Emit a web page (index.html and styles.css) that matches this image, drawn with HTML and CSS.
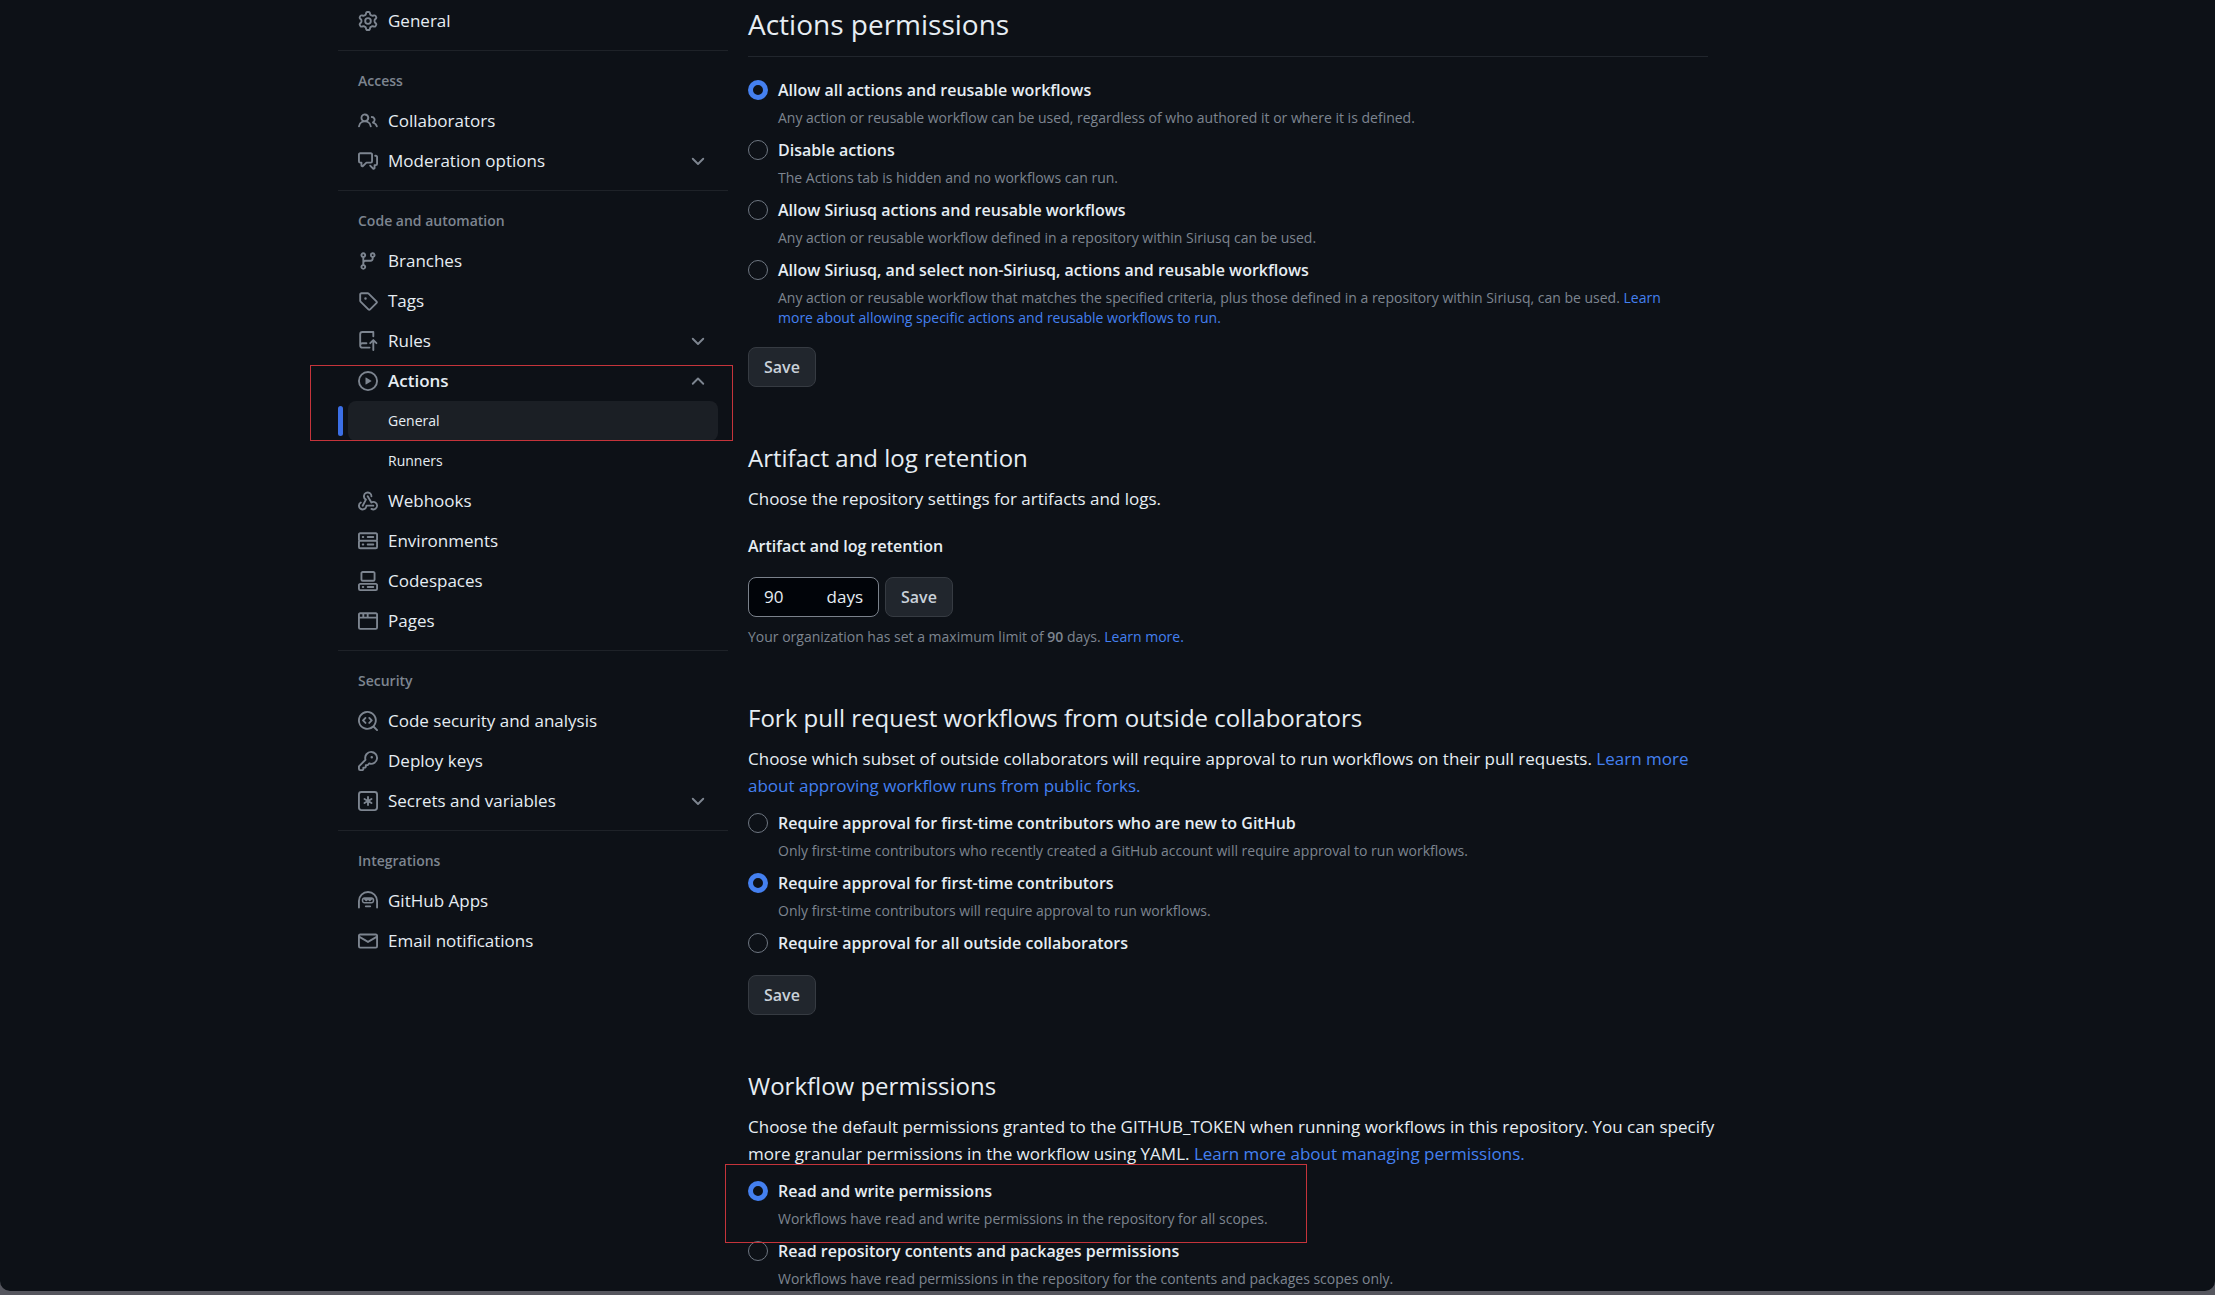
FILE: index.html
```html
<!DOCTYPE html>
<html lang="en">
<head>
    <meta charset="UTF-8">
    <meta name="viewport" content="width=device-width, initial-scale=1.0">
    <title>Actions settings</title>
    <link rel="stylesheet" href="styles.css">
</head>
<body>
    <div class="window">
        <div class="layout">
            <nav class="sidebar" aria-label="Settings">
                <ul>
                    <li><a class="item" href="#">
                        <svg class="icon" viewBox="0 0 16 16"><path d="M8 0a8.2 8.2 0 0 1 .701.031C9.444.095 9.99.645 10.16 1.29l.288 1.107c.018.066.079.158.212.224.231.114.454.243.668.386.123.082.233.09.299.071l1.103-.303c.644-.176 1.392.021 1.82.63.27.385.506.792.704 1.218.315.675.111 1.422-.364 1.891l-.814.806c-.049.048-.098.147-.088.294.016.257.016.515 0 .772-.01.147.038.246.088.294l.814.806c.475.469.679 1.216.364 1.891a7.977 7.977 0 0 1-.704 1.217c-.428.61-1.176.807-1.82.63l-1.102-.302c-.067-.019-.177-.011-.3.071a5.909 5.909 0 0 1-.668.386c-.133.066-.194.158-.211.224l-.29 1.106c-.168.646-.715 1.196-1.458 1.26a8.006 8.006 0 0 1-1.402 0c-.743-.064-1.289-.614-1.458-1.26l-.289-1.106c-.018-.066-.079-.158-.212-.224a5.738 5.738 0 0 1-.668-.386c-.123-.082-.233-.09-.299-.071l-1.103.303c-.644.176-1.392-.021-1.82-.63a8.12 8.12 0 0 1-.704-1.218c-.315-.675-.111-1.422.363-1.891l.815-.806c.05-.048.098-.147.088-.294a6.214 6.214 0 0 1 0-.772c.01-.147-.038-.246-.088-.294l-.815-.806C.635 6.045.431 5.298.746 4.623a7.92 7.92 0 0 1 .704-1.217c.428-.61 1.176-.807 1.82-.63l1.102.302c.067.019.177.011.3-.071.214-.143.437-.272.668-.386.133-.066.194-.158.211-.224l.29-1.106C6.009.645 6.556.095 7.299.03 7.53.01 7.764 0 8 0Zm-.571 1.525c-.036.003-.108.036-.137.146l-.289 1.105c-.147.561-.549.967-.998 1.189-.173.086-.34.183-.5.29-.417.278-.97.423-1.529.27l-1.103-.303c-.109-.03-.175.016-.195.045-.22.312-.412.644-.573.99-.014.031-.021.11.059.19l.815.806c.411.406.562.957.53 1.456a4.709 4.709 0 0 0 0 .582c.032.499-.119 1.05-.53 1.456l-.815.806c-.081.08-.073.159-.059.19.162.346.353.677.573.989.02.03.085.076.195.046l1.102-.303c.56-.153 1.113-.008 1.53.27.161.107.328.204.501.29.447.222.85.629.997 1.189l.289 1.105c.029.109.101.143.137.146a6.6 6.6 0 0 0 1.142 0c.036-.003.108-.036.137-.146l.289-1.105c.147-.561.549-.967.998-1.189.173-.086.34-.183.5-.29.417-.278.97-.423 1.529-.27l1.103.303c.109.029.175-.016.195-.045.22-.313.411-.644.573-.99.014-.031.021-.11-.059-.19l-.815-.806c-.411-.406-.562-.957-.53-1.456a4.709 4.709 0 0 0 0-.582c-.032-.499.119-1.05.53-1.456l.815-.806c.081-.08.073-.159.059-.19a6.464 6.464 0 0 0-.573-.989c-.02-.03-.085-.076-.195-.046l-1.102.303c-.56.153-1.113.008-1.53-.27a4.44 4.44 0 0 0-.501-.29c-.447-.222-.85-.629-.997-1.189l-.289-1.105c-.029-.11-.101-.143-.137-.146a6.6 6.6 0 0 0-1.142 0ZM11 8a3 3 0 1 1-6 0 3 3 0 0 1 6 0ZM9.5 8a1.5 1.5 0 1 0-3.001.001A1.5 1.5 0 0 0 9.5 8Z"/></svg>
                        General</a></li>
                </ul>

                <h3>Access</h3>
                <ul>
                    <li><a class="item" href="#">
                        <svg class="icon" viewBox="0 0 16 16"><path d="M2 5.5a3.5 3.5 0 1 1 5.898 2.549 5.508 5.508 0 0 1 3.034 4.084.75.75 0 1 1-1.482.235 4 4 0 0 0-7.9 0 .75.75 0 0 1-1.482-.236A5.507 5.507 0 0 1 3.102 8.05 3.493 3.493 0 0 1 2 5.5ZM11 4a3.001 3.001 0 0 1 2.22 5.018 5.01 5.01 0 0 1 2.56 3.012.749.749 0 0 1-.885.954.752.752 0 0 1-.549-.514 3.507 3.507 0 0 0-2.522-2.372.75.75 0 0 1-.574-.73v-.352a.75.75 0 0 1 .416-.672A1.5 1.5 0 0 0 11 5.5.75.75 0 0 1 11 4Zm-5.5-.5a2 2 0 1 0-.001 3.999A2 2 0 0 0 5.5 3.5Z"/></svg>
                        Collaborators</a></li>
                    <li><a class="item" href="#">
                        <svg class="icon" viewBox="0 0 16 16"><path d="M1.75 1h8.5c.966 0 1.75.784 1.75 1.75v5.5A1.75 1.75 0 0 1 10.25 10H7.061l-2.574 2.573A1.458 1.458 0 0 1 2 11.543V10h-.25A1.75 1.75 0 0 1 0 8.25v-5.5C0 1.784.784 1 1.75 1ZM1.5 2.75v5.5c0 .138.112.25.25.25h1a.75.75 0 0 1 .75.75v2.19l2.72-2.72a.749.749 0 0 1 .53-.22h3.5a.25.25 0 0 0 .25-.25v-5.5a.25.25 0 0 0-.25-.25h-8.5a.25.25 0 0 0-.25.25Zm13 2a.25.25 0 0 0-.25-.25h-.5a.75.75 0 0 1 0-1.5h.5c.966 0 1.75.784 1.75 1.75v5.5A1.75 1.75 0 0 1 14.25 12H14v1.543a1.458 1.458 0 0 1-2.487 1.03L9.22 12.28a.749.749 0 0 1 .326-1.275.749.749 0 0 1 .734.215l2.22 2.22v-2.19a.75.75 0 0 1 .75-.75h1a.25.25 0 0 0 .25-.25Z"/></svg>
                        Moderation options
                        <svg class="chevron" viewBox="0 0 16 16"><path d="M3.8 6.2 8 10.4l4.2-4.2"/></svg></a></li>
                </ul>

                <h3>Code and automation</h3>
                <ul>
                    <li><a class="item" href="#">
                        <svg class="icon" viewBox="0 0 16 16"><path d="M9.5 3.25a2.25 2.25 0 1 1 3 2.122V6A2.5 2.5 0 0 1 10 8.5H6a1 1 0 0 0-1 1v1.128a2.251 2.251 0 1 1-1.5 0V5.372a2.25 2.25 0 1 1 1.5 0v1.836A2.493 2.493 0 0 1 6 7h4a1 1 0 0 0 1-1v-.628A2.25 2.25 0 0 1 9.5 3.25Zm-6 0a.75.75 0 1 0 1.5 0 .75.75 0 0 0-1.5 0Zm8.25-.75a.75.75 0 1 0 0 1.5.75.75 0 0 0 0-1.5ZM4.25 12a.75.75 0 1 0 0 1.5.75.75 0 0 0 0-1.5Z"/></svg>
                        Branches</a></li>
                    <li><a class="item" href="#">
                        <svg class="icon" viewBox="0 0 16 16"><path d="M1 7.775V2.75C1 1.784 1.784 1 2.75 1h5.025c.464 0 .91.184 1.238.513l6.25 6.25a1.75 1.75 0 0 1 0 2.474l-5.026 5.026a1.75 1.75 0 0 1-2.474 0l-6.25-6.25A1.752 1.752 0 0 1 1 7.775Zm1.5 0c0 .066.026.13.073.177l6.25 6.25a.25.25 0 0 0 .354 0l5.025-5.025a.25.25 0 0 0 0-.354l-6.25-6.25a.25.25 0 0 0-.177-.073H2.75a.25.25 0 0 0-.25.25ZM6 5a1 1 0 1 1 0 2 1 1 0 0 1 0-2Z"/></svg>
                        Tags</a></li>
                    <li><a class="item" href="#">
                        <svg class="icon" viewBox="0 0 16 16"><path d="M1 2.5A2.5 2.5 0 0 1 3.5 0h8.75a.75.75 0 0 1 .75.75v3.5a.75.75 0 0 1-1.5 0V1.5h-8a1 1 0 0 0-1 1v6.708A2.493 2.493 0 0 1 3.5 9h3.25a.75.75 0 0 1 0 1.5H3.5a1 1 0 0 0 0 2h5.75a.75.75 0 0 1 0 1.5H3.5A2.5 2.5 0 0 1 1 11.5Zm13.23 7.79-.001-.001-1.224-1.224v6.184a.75.75 0 0 1-1.5 0V9.066L10.28 10.29a.75.75 0 0 1-1.06-1.061l2.505-2.504a.75.75 0 0 1 1.06 0L15.29 9.23a.751.751 0 0 1-.018 1.042.751.751 0 0 1-1.042.018Z"/></svg>
                        Rules
                        <svg class="chevron" viewBox="0 0 16 16"><path d="M3.8 6.2 8 10.4l4.2-4.2"/></svg></a></li>
                    <li class="highlight"><a class="item open" href="#">
                        <svg class="icon" viewBox="0 0 16 16"><path d="M8 0a8 8 0 1 1 0 16A8 8 0 0 1 8 0ZM1.5 8a6.5 6.5 0 1 0 13 0 6.5 6.5 0 0 0-13 0Zm4.879-2.773 4.264 2.559a.25.25 0 0 1 0 .428l-4.264 2.559A.25.25 0 0 1 6 10.559V5.442a.25.25 0 0 1 .379-.215Z"/></svg>
                        Actions
                        <svg class="chevron" viewBox="0 0 16 16"><path d="M3.8 10.2 8 6l4.2 4.2"/></svg></a>
                        <ul>
                            <li><a class="item sub current" href="#" aria-current="page">General</a></li>
                            <li><a class="item sub" href="#">Runners</a></li>
                        </ul>
                    </li>
                    <li><a class="item" href="#">
                        <svg class="icon" viewBox="0 0 16 16"><path d="M5.5 4.25a2.25 2.25 0 0 1 4.5 0 .75.75 0 0 0 1.5 0 3.75 3.75 0 1 0-6.14 2.889l-2.272 4.258a.75.75 0 0 0 1.324.706L7 7.25a.75.75 0 0 0-.309-1.015A2.25 2.25 0 0 1 5.5 4.25Z"/><path d="M7.364 3.607a.75.75 0 0 1 1.03.257l2.608 4.349a3.75 3.75 0 1 1-.628 6.785.75.75 0 0 1 .752-1.299 2.25 2.25 0 1 0-.033-3.88.75.75 0 0 1-1.03-.256L7.107 4.636a.75.75 0 0 1 .257-1.03Z"/><path d="M2.9 8.776A.75.75 0 0 1 2.625 9.8 2.25 2.25 0 1 0 6 11.75a.75.75 0 0 1 .75-.751h5.5a.75.75 0 0 1 0 1.5H7.425a3.751 3.751 0 1 1-5.55-3.998.75.75 0 0 1 1.024.274Z"/></svg>
                        Webhooks</a></li>
                    <li><a class="item" href="#">
                        <svg class="icon" viewBox="0 0 16 16"><path d="M1.75 1h12.5c.966 0 1.75.784 1.75 1.75v4c0 .372-.116.717-.314 1 .198.283.314.628.314 1v4a1.75 1.75 0 0 1-1.75 1.75H1.75A1.75 1.75 0 0 1 0 12.75v-4c0-.358.109-.707.314-1a1.739 1.739 0 0 1-.314-1v-4C0 1.784.784 1 1.75 1ZM1.5 2.75v4c0 .138.112.25.25.25h12.5a.25.25 0 0 0 .25-.25v-4a.25.25 0 0 0-.25-.25H1.75a.25.25 0 0 0-.25.25Zm.25 5.75a.25.25 0 0 0-.25.25v4c0 .138.112.25.25.25h12.5a.25.25 0 0 0 .25-.25v-4a.25.25 0 0 0-.25-.25ZM7 4.75A.75.75 0 0 1 7.75 4h4.5a.75.75 0 0 1 0 1.5h-4.5A.75.75 0 0 1 7 4.75ZM7.75 10h4.5a.75.75 0 0 1 0 1.5h-4.5a.75.75 0 0 1 0-1.5ZM3 4.75A.75.75 0 0 1 3.75 4h.5a.75.75 0 0 1 0 1.5h-.5A.75.75 0 0 1 3 4.75ZM3.75 10h.5a.75.75 0 0 1 0 1.5h-.5a.75.75 0 0 1 0-1.5Z"/></svg>
                        Environments</a></li>
                    <li><a class="item" href="#">
                        <svg class="icon" viewBox="0 0 16 16"><path d="M0 11.25c0-.966.784-1.75 1.75-1.75h12.5c.966 0 1.75.784 1.75 1.75v3A1.75 1.75 0 0 1 14.25 16H1.75A1.75 1.75 0 0 1 0 14.25Zm2-9.5C2 .784 2.784 0 3.75 0h8.5C13.216 0 14 .784 14 1.75v5a1.75 1.75 0 0 1-1.75 1.75h-8.5A1.75 1.75 0 0 1 2 6.75Zm1.75-.25a.25.25 0 0 0-.25.25v5c0 .138.112.25.25.25h8.5a.25.25 0 0 0 .25-.25v-5a.25.25 0 0 0-.25-.25Zm-2 9.5a.25.25 0 0 0-.25.25v3c0 .138.112.25.25.25h12.5a.25.25 0 0 0 .25-.25v-3a.25.25 0 0 0-.25-.25Z"/><path d="M7 12.75a.75.75 0 0 1 .75-.75h4.5a.75.75 0 0 1 0 1.5h-4.5a.75.75 0 0 1-.75-.75Zm-4 0a.75.75 0 0 1 .75-.75h.5a.75.75 0 0 1 0 1.5h-.5a.75.75 0 0 1-.75-.75Z"/></svg>
                        Codespaces</a></li>
                    <li><a class="item" href="#">
                        <svg class="icon" viewBox="0 0 16 16"><path d="M0 2.75C0 1.784.784 1 1.75 1h12.5c.966 0 1.75.784 1.75 1.75v10.5A1.75 1.75 0 0 1 14.25 15H1.75A1.75 1.75 0 0 1 0 13.25ZM14.5 6h-13v7.25c0 .138.112.25.25.25h12.5a.25.25 0 0 0 .25-.25Zm-6-3.5v2h6V2.75a.25.25 0 0 0-.25-.25ZM5 2.5v2h2v-2Zm-3.25 0a.25.25 0 0 0-.25.25V4.5h2v-2Z"/></svg>
                        Pages</a></li>
                </ul>

                <h3>Security</h3>
                <ul>
                    <li><a class="item" href="#">
                        <svg class="icon" viewBox="0 0 16 16"><path d="M8.47 4.97a.75.75 0 0 0 0 1.06L9.94 7.5 8.47 8.97a.75.75 0 1 0 1.06 1.06l2-2a.75.75 0 0 0 0-1.06l-2-2a.75.75 0 0 0-1.06 0ZM6.53 6.03a.75.75 0 0 0-1.06-1.06l-2 2a.75.75 0 0 0 0 1.06l2 2a.75.75 0 1 0 1.06-1.06L5.06 7.5l1.47-1.47Z"/><path d="M12.246 13.307a7.501 7.501 0 1 1 1.06-1.06l2.474 2.473a.749.749 0 1 1-1.06 1.06l-2.474-2.473ZM1.5 7.5a6.002 6.002 0 0 0 3.608 5.504 6.002 6.002 0 0 0 6.486-1.117.748.748 0 0 1 .292-.293A6 6 0 1 0 1.5 7.5Z"/></svg>
                        Code security and analysis</a></li>
                    <li><a class="item" href="#">
                        <svg class="icon" viewBox="0 0 16 16"><path d="M10.5 0a5.499 5.499 0 1 1-1.288 10.848l-.932.932a.749.749 0 0 1-.53.22H7v.75a.749.749 0 0 1-.22.53l-.5.5a.749.749 0 0 1-.53.22H5v.75a.749.749 0 0 1-.22.53l-.5.5a.749.749 0 0 1-.53.22h-2A1.75 1.75 0 0 1 0 14.25v-2c0-.199.079-.389.22-.53l4.932-4.932A5.5 5.5 0 0 1 10.5 0Zm-4 5.5c-.001.431.069.86.205 1.269a.75.75 0 0 1-.181.768L1.5 12.56v1.69c0 .138.112.25.25.25h1.69l.06-.06v-1.19a.75.75 0 0 1 .75-.75h1.19l.06-.06v-1.19a.75.75 0 0 1 .75-.75h1.19l1.023-1.025a.75.75 0 0 1 .768-.18A4 4 0 1 0 6.5 5.5ZM11 6a1 1 0 1 1 0-2 1 1 0 0 1 0 2Z"/></svg>
                        Deploy keys</a></li>
                    <li><a class="item" href="#">
                        <svg class="icon" viewBox="0 0 16 16"><path d="M0 2.75A2.75 2.75 0 0 1 2.75 0h10.5A2.75 2.75 0 0 1 16 2.75v10.5A2.75 2.75 0 0 1 13.25 16H2.75A2.75 2.75 0 0 1 0 13.25ZM2.75 1.5c-.69 0-1.25.56-1.25 1.25v10.5c0 .69.56 1.25 1.25 1.25h10.5c.69 0 1.25-.56 1.25-1.25V2.75c0-.69-.56-1.25-1.25-1.25Z"/><path d="M8 4a.75.75 0 0 1 .75.75V6.7l1.69-.975a.75.75 0 0 1 .75 1.3L9.5 8l1.69.976a.75.75 0 0 1-.75 1.298L8.75 9.3v1.951a.75.75 0 0 1-1.5 0V9.299l-1.69.976a.75.75 0 0 1-.75-1.3L6.5 8l-1.69-.975a.75.75 0 0 1 .75-1.3l1.69.976V4.75A.75.75 0 0 1 8 4Z"/></svg>
                        Secrets and variables
                        <svg class="chevron" viewBox="0 0 16 16"><path d="M3.8 6.2 8 10.4l4.2-4.2"/></svg></a></li>
                </ul>

                <h3>Integrations</h3>
                <ul>
                    <li><a class="item" href="#">
                        <svg class="icon" viewBox="0 0 16 16" fill-rule="evenodd"><path d="M0 8a8 8 0 1 1 16 0v5.25a.75.75 0 0 1-1.5 0V8a6.5 6.5 0 1 0-13 0v5.25a.75.75 0 0 1-1.5 0V8Zm5.5 4.25a.75.75 0 0 1 .75-.75h3.5a.75.75 0 0 1 0 1.5h-3.5a.75.75 0 0 1-.75-.75ZM3 7.25C3 6 4 5 5.25 5h5.5C12 5 13 6 13 7.25v.5C13 9 12 10 10.75 10h-5.5C4 10 3 9 3 7.75ZM5.25 6.3c-.6 0-1 .4-1 .95v.5c0 .6.4 1 1 1h5.5c.6 0 1-.4 1-1v-.5c0-.3-.1-.5-.3-.7L9.9 8a.7.7 0 0 1-1 0L8 7.2l-.9.8a.7.7 0 0 1-1 0L4.6 6.5Z"/></svg>
                        GitHub Apps</a></li>
                    <li><a class="item" href="#">
                        <svg class="icon" viewBox="0 0 16 16"><path d="M1.75 2h12.5c.966 0 1.75.784 1.75 1.75v8.5A1.75 1.75 0 0 1 14.25 14H1.75A1.75 1.75 0 0 1 0 12.25v-8.5C0 2.784.784 2 1.75 2ZM1.5 12.251c0 .138.112.25.25.25h12.5a.25.25 0 0 0 .25-.25V5.809L8.38 9.397a.75.75 0 0 1-.76 0L1.5 5.809v6.442Zm13-8.181v-.32a.25.25 0 0 0-.25-.25H1.75a.25.25 0 0 0-.25.25v.32L8 7.88Z"/></svg>
                        Email notifications</a></li>
                </ul>
            </nav>

            <main class="content">
                <h1>Actions permissions</h1>
                <form>
                    <div class="option">
                        <input type="radio" name="actions" id="allow-all" checked>
                        <label for="allow-all">Allow all actions and reusable workflows</label>
                        <p>Any action or reusable workflow can be used, regardless of who authored it or where it is defined.</p>
                    </div>
                    <div class="option">
                        <input type="radio" name="actions" id="disable">
                        <label for="disable">Disable actions</label>
                        <p>The Actions tab is hidden and no workflows can run.</p>
                    </div>
                    <div class="option">
                        <input type="radio" name="actions" id="allow-own">
                        <label for="allow-own">Allow Siriusq actions and reusable workflows</label>
                        <p>Any action or reusable workflow defined in a repository within Siriusq can be used.</p>
                    </div>
                    <div class="option">
                        <input type="radio" name="actions" id="allow-select">
                        <label for="allow-select">Allow Siriusq, and select non-Siriusq, actions and reusable workflows</label>
                        <p>Any action or reusable workflow that matches the specified criteria, plus those defined in a repository within Siriusq, can be used. <a href="#">Learn more about allowing specific actions and reusable workflows to run.</a></p>
                    </div>
                    <button type="button" class="save">Save</button>
                </form>

                <h2>Artifact and log retention</h2>
                <p class="intro">Choose the repository settings for artifacts and logs.</p>
                <form>
                    <label class="field-label" for="days">Artifact and log retention</label>
                    <div class="field-row">
                        <div class="days-field">
                            <input type="text" id="days" value="90">
                            <span>days</span>
                        </div>
                        <button type="button">Save</button>
                    </div>
                    <p class="note">Your organization has set a maximum limit of <strong>90</strong> days. <a href="#">Learn more.</a></p>
                </form>

                <h2>Fork pull request workflows from outside collaborators</h2>
                <p class="intro">Choose which subset of outside collaborators will require approval to run workflows on their pull requests. <a href="#">Learn more about approving workflow runs from public forks.</a></p>
                <form class="options">
                    <div class="option">
                        <input type="radio" name="fork" id="fork-new">
                        <label for="fork-new">Require approval for first-time contributors who are new to GitHub</label>
                        <p>Only first-time contributors who recently created a GitHub account will require approval to run workflows.</p>
                    </div>
                    <div class="option">
                        <input type="radio" name="fork" id="fork-first" checked>
                        <label for="fork-first">Require approval for first-time contributors</label>
                        <p>Only first-time contributors will require approval to run workflows.</p>
                    </div>
                    <div class="option">
                        <input type="radio" name="fork" id="fork-all">
                        <label for="fork-all">Require approval for all outside collaborators</label>
                    </div>
                    <button type="button" class="save">Save</button>
                </form>

                <h2>Workflow permissions</h2>
                <p class="intro">Choose the default permissions granted to the GITHUB_TOKEN when running workflows in this repository. You can specify more granular permissions in the workflow using YAML. <a href="#">Learn more about managing permissions.</a></p>
                <form class="options">
                    <div class="option highlight">
                        <input type="radio" name="token" id="read-write" checked>
                        <label for="read-write">Read and write permissions</label>
                        <p>Workflows have read and write permissions in the repository for all scopes.</p>
                    </div>
                    <div class="option">
                        <input type="radio" name="token" id="read-only">
                        <label for="read-only">Read repository contents and packages permissions</label>
                        <p>Workflows have read permissions in the repository for the contents and packages scopes only.</p>
                    </div>
                </form>
            </main>
        </div>
    </div>
</body>
</html>
```
FILE: styles.css
```css
*,
*::before,
*::after {
    box-sizing: border-box;
}

body {
    margin: 0;
    background: #55565e;
    color: #e6edf3;
    font-family: "Open Sans", "Noto Sans", sans-serif;
    font-size: 17px;
    line-height: 26px;
}

.window {
    height: calc(100vh - 4px);
    overflow: hidden;
    background: #0d1117;
    border-radius: 0 0 10px 10px;
}

.layout {
    display: grid;
    grid-template-columns: 390px minmax(0, 960px);
    column-gap: 20px;
    justify-content: center;
    padding-right: 169px;
}

a {
    color: #4480f0;
    text-decoration: none;
}

h1, h2, h3, p, ul {
    margin: 0;
    padding: 0;
}

ul {
    list-style: none;
}

/* Sidebar */
.sidebar {
    padding-top: 1px;
}

.sidebar h3 {
    margin-top: 9px;
    padding: 20px 20px 10px;
    border-top: 1px solid #1e2228;
    color: #7d8590;
    font-size: 14px;
    font-weight: 600;
    line-height: 20px;
}

.item {
    display: flex;
    align-items: center;
    gap: 10px;
    height: 40px;
    margin: 0 10px;
    padding: 0 10px;
    border-radius: 8px;
    color: #e6edf3;
}

.item.open {
    font-weight: 600;
}

.item.sub {
    padding-left: 40px;
    font-size: 14px;
}

.item.current {
    position: relative;
    background: #1b1f25;
}

.item.current::before {
    content: "";
    position: absolute;
    left: -10px;
    top: 5px;
    width: 5px;
    height: 30px;
    border-radius: 3px;
    background: #3b6fe6;
}

.icon {
    width: 20px;
    height: 20px;
    fill: #7d8590;
}

.chevron {
    width: 20px;
    height: 20px;
    margin-left: auto;
    fill: none;
    stroke: #7d8590;
    stroke-width: 1.5;
    stroke-linecap: round;
    stroke-linejoin: round;
}

/* Red marker boxes */
.highlight {
    position: relative;
}

.highlight::after {
    content: "";
    position: absolute;
    border: 1px solid #c5343b;
    pointer-events: none;
}

.sidebar .highlight::after {
    top: 4px;
    left: -28px;
    width: 423px;
    height: 76px;
}

.option.highlight::after {
    top: -14px;
    left: -23px;
    width: 582px;
    height: 79px;
}

/* Content */
h1 {
    padding: 2px 0 9px;
    border-bottom: 1px solid #21262d;
    margin-bottom: 20px;
    font-size: 28px;
    font-weight: 400;
    line-height: 45px;
}

h2 {
    margin-top: 52px;
    margin-bottom: 8px;
    font-size: 24px;
    font-weight: 400;
    line-height: 38px;
}

.intro {
    margin-right: -12px;
    line-height: 27px;
}

.options {
    margin-top: 11px;
}

.option {
    display: grid;
    grid-template-columns: 20px minmax(0, 1fr);
    column-gap: 10px;
    align-items: center;
    margin-bottom: 9px;
}

.option label,
.field-label {
    font-size: 16px;
    font-weight: 600;
}

.option p {
    grid-column: 2;
    margin-top: 5px;
    padding-right: 20px;
}

.option p,
.note {
    color: #7d8590;
    font-size: 14px;
    line-height: 20px;
}

input[type="radio"] {
    appearance: none;
    width: 20px;
    height: 20px;
    margin: 0;
    border: 1px solid #6e7681;
    border-radius: 50%;
}

input[type="radio"]:checked {
    border: 5px solid #4480f0;
}

button {
    height: 40px;
    padding: 0 15px;
    border: 1px solid #363b42;
    border-radius: 8px;
    background: #21262d;
    color: #c9d1d9;
    font: inherit;
    font-size: 16px;
    font-weight: 600;
    cursor: pointer;
}

.save {
    display: block;
    margin-top: 19px;
}

.field-label {
    display: block;
    margin: 21px 0 18px;
}

.field-row {
    display: flex;
    gap: 6px;
}

.days-field {
    display: flex;
    align-items: center;
    width: 131px;
    height: 40px;
    padding: 0 15px;
    border: 1px solid #7a818b;
    border-radius: 8px;
    background: #010409;
}

.days-field input {
    flex: 1;
    min-width: 0;
    padding: 0;
    border: 0;
    outline: 0;
    background: none;
    color: inherit;
    font: inherit;
}

.note {
    margin-top: 10px;
}

.note strong {
    font-weight: 600;
}
```
